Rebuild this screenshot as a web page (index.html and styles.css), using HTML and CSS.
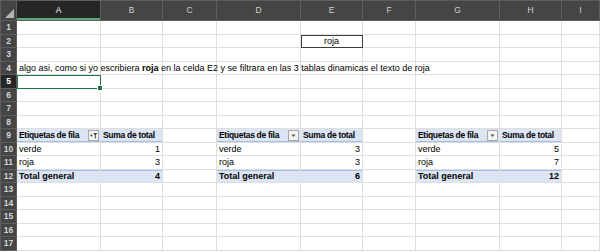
FILE: index.html
```html
<!DOCTYPE html>
<html lang="es">
<head>
  <meta charset="UTF-8" />
  <title>Libro1 - Excel</title>
  <link rel="stylesheet" href="styles.css">
</head>
<body>

  <table class="sheet">
    <colgroup>
      <col class="col-rh"><col class="col-a"><col class="col-b"><col class="col-c"><col class="col-d">
      <col class="col-e"><col class="col-f"><col class="col-g"><col class="col-h"><col>
    </colgroup>

    <!-- column headers -->
    <tr class="head">
      <th class="corner"><span class="corner-tri"></span></th>
      <th class="sel">A</th><th>B</th><th>C</th><th>D</th><th>E</th><th>F</th><th>G</th><th>H</th><th>I</th>
    </tr>

    <tr><th>1</th><td></td><td></td><td></td><td></td><td></td><td></td><td></td><td></td><td></td></tr>
    <tr><th>2</th><td></td><td></td><td></td><td></td><td class="boxed">roja</td><td></td><td></td><td></td><td></td></tr>
    <tr><th>3</th><td></td><td></td><td></td><td></td><td></td><td></td><td></td><td></td><td></td></tr>
    <tr><th>4</th><td class="note">algo asi, como si yo escribiera <b>roja</b> en la celda E2 y se filtrara en las 3 tablas dinamicas el texto de roja</td><td></td><td></td><td></td><td></td><td></td><td></td><td></td><td></td></tr>
    <tr><th class="sel">5</th><td class="active"></td><td></td><td></td><td></td><td></td><td></td><td></td><td></td><td></td></tr>
    <tr><th>6</th><td></td><td></td><td></td><td></td><td></td><td></td><td></td><td></td><td></td></tr>
    <tr><th>7</th><td></td><td></td><td></td><td></td><td></td><td></td><td></td><td></td><td></td></tr>
    <tr><th>8</th><td></td><td></td><td></td><td></td><td></td><td></td><td></td><td></td><td></td></tr>

    <!-- pivot tables -->
    <tr>
      <th>9</th>
      <td class="pv-head pv-left">Etiquetas de fila<span class="filter-btn"><svg width="9" height="9" viewBox="0 0 9 9"><path d="M0.8 3.8h3l-1.5 1.9z" fill="#444"/><path d="M4.2 2h4.3l-1.7 2.1v3.6l-1-.8v-2.8z" fill="#444"/></svg></span></td>
      <td class="pv-head">Suma de total</td>
      <td></td>
      <td class="pv-head pv-left">Etiquetas de fila<span class="filter-btn"><svg width="9" height="9" viewBox="0 0 9 9"><path d="M2.5 3.5h4l-2 2.5z" fill="#555"/></svg></span></td>
      <td class="pv-head">Suma de total</td>
      <td></td>
      <td class="pv-head pv-left">Etiquetas de fila<span class="filter-btn"><svg width="9" height="9" viewBox="0 0 9 9"><path d="M2.5 3.5h4l-2 2.5z" fill="#555"/></svg></span></td>
      <td class="pv-head">Suma de total</td>
      <td></td>
    </tr>
    <tr><th>10</th><td>verde</td><td class="num">1</td><td></td><td>verde</td><td class="num">3</td><td></td><td>verde</td><td class="num">5</td><td></td></tr>
    <tr><th>11</th><td>roja</td><td class="num">3</td><td></td><td>roja</td><td class="num">3</td><td></td><td>roja</td><td class="num">7</td><td></td></tr>
    <tr>
      <th>12</th>
      <td class="pv-total pv-left">Total general</td><td class="pv-total num">4</td><td></td>
      <td class="pv-total pv-left">Total general</td><td class="pv-total num">6</td><td></td>
      <td class="pv-total pv-left">Total general</td><td class="pv-total num">12</td><td></td>
    </tr>

    <tr><th>13</th><td></td><td></td><td></td><td></td><td></td><td></td><td></td><td></td><td></td></tr>
    <tr><th>14</th><td></td><td></td><td></td><td></td><td></td><td></td><td></td><td></td><td></td></tr>
    <tr><th>15</th><td></td><td></td><td></td><td></td><td></td><td></td><td></td><td></td><td></td></tr>
    <tr><th>16</th><td></td><td></td><td></td><td></td><td></td><td></td><td></td><td></td><td></td></tr>
    <tr><th>17</th><td></td><td></td><td></td><td></td><td></td><td></td><td></td><td></td><td></td></tr>
  </table>

</body>
</html>
```

FILE: styles.css
```css
body {
  margin: 0;
  background: #ffffff;
  overflow: hidden;
}

.sheet {
  border-collapse: collapse;
  table-layout: fixed;
  width: 600px;
  font-family: "Liberation Sans", Arial, sans-serif;
  font-size: 9px;
  color: #000;
}

.col-rh { width: 16px; }
.col-a, .col-d, .col-g { width: 84px; }
.col-b, .col-e, .col-h { width: 62px; }
.col-c { width: 54px; }
.col-f { width: 53px; }

/* sheet rows are ~13.5px, alternate 14/13 to land on whole pixels */
tr {
  height: 13px;
}

tr:nth-child(even) {
  height: 14px;
}

tr.head {
  height: 20px;
}

td {
  padding: 0 2px;
  border: 1px solid #dedede;
  white-space: nowrap;
  overflow: visible;
  line-height: 11px;
}

th {
  padding: 0;
  background: #454545;
  color: #d4d4d4;
  font-weight: bold;
  font-size: 8.5px;
  line-height: 11px;
  border: 1px solid #5e5e5e;
}

.head th {
  font-weight: normal;
  color: #d0d0d0;
}

th.sel {
  background: #262626;
  color: #ffffff;
}

.head th.sel {
  box-shadow: inset 0 -2px 0 #5aa77a;
}

.corner {
  position: relative;
}

.corner-tri {
  position: absolute;
  right: 2px;
  bottom: 2px;
  width: 0;
  height: 0;
  border-left: 9px solid transparent;
  border-bottom: 9px solid #b5b5b5;
}

.boxed {
  text-align: center;
  outline: 1px solid #3c3c3c;
  outline-offset: -1px;
}

.active {
  position: relative;
  outline: 1px solid #217346;
  outline-offset: -1px;
}

.active::after {
  content: "";
  position: absolute;
  right: -3px;
  bottom: -3px;
  width: 4px;
  height: 4px;
  background: #217346;
  border: 1px solid #fff;
}

.num {
  text-align: right;
}

.pv-head,
.pv-total {
  background: #dce5f3;
  font-weight: bold;
}

.pv-head {
  font-size: 8.5px;
  letter-spacing: -0.3px;
  box-shadow: inset 0 -1px 0 #a4bde3;
}

.pv-total {
  box-shadow: inset 0 1px 0 #a4bde3;
}

.pv-left {
  position: relative;
  border-right-color: #dce5f3;
}

/* dropdown button sits over the right edge of the label cell */
.filter-btn {
  position: absolute;
  right: 1px;
  top: 1px;
  width: 9px;
  height: 9px;
  border: 1px solid #a8a8a8;
  background: #f3f3f3;
  line-height: 0;
}
```
